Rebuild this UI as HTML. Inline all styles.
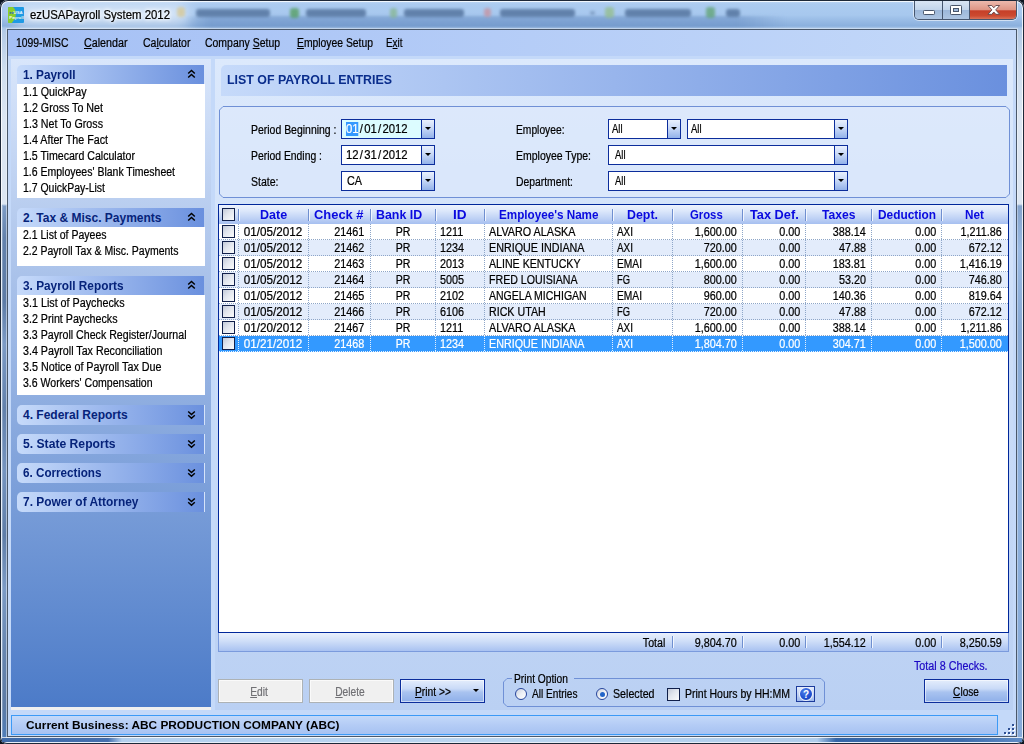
<!DOCTYPE html>
<html lang="en"><head><meta charset="utf-8"><title>ezUSAPayroll System 2012</title>
<style>
html,body{margin:0;padding:0}
body{width:1024px;height:744px;position:relative;overflow:hidden;background:#0b1420;font-family:"Liberation Sans",sans-serif;font-size:11px;color:#000}
div,span,svg{position:absolute;box-sizing:border-box}
.t{white-space:nowrap;display:block;-webkit-text-stroke:.22px currentColor}
u{text-decoration:underline;text-underline-offset:1px}
#frame{left:0;top:0;width:1024px;height:744px;border-radius:8px 8px 7px 7px;
 background:linear-gradient(#c3daf4 0,#accbf0 4px,#a7c8ee 15px,#97bae4 21px,#8bb0dd 26px,#a9c6e8 28px,#b4cbe7 31px,#cfdeef 70px,#dce6f2 120px,#dce6f2 204px,#84a3cc 206px,#9bbbe4 250px,#88a9d4 330px,#8fb1dd 480px,#86aad9 744px);
 box-shadow:inset 0 0 0 1px #1d2838, inset 0 0 0 2px rgba(255,255,255,.8)}
#fbot{left:2px;top:737px;width:1020px;height:5px;background:linear-gradient(90deg,#3f6aa8 0,#456fae 106px,#b4d0ee 120px,#bcd6f1 500px,#b0cdec 815px,#3566a8 834px,#3f6dad 960px,#5f8cc6 100%);box-shadow:inset 0 1px 0 rgba(255,255,255,.75)}
#client{left:8px;top:30px;width:1008px;height:706px;background:#c4d9f9;box-shadow:0 0 0 1px #4a586a,0 0 0 2px rgba(255,255,255,.35)}
.hd{background:linear-gradient(90deg,#c6dafa 0,#6a90de 100%)}
.cb{background:#fff;border:1px solid #0c2d9b}
.cbb{top:0;bottom:0;right:0;width:13px;border-left:1px solid #0c2d9b;background:linear-gradient(#e9f0fd 0,#c9d9f7 45%,#93b2ea 100%)}
.cbb:after{content:"";position:absolute;left:3px;top:7px;border:3px solid transparent;border-top:3px solid #000;border-bottom:0}
.chk{width:13px;height:13px;border:1px solid #101f4a;background:linear-gradient(135deg,#c3cad9 0,#e2e6ee 45%,#fafbfc 100%)}
.btn{border:1px solid #0c2d9b;background:linear-gradient(#e4edfc 0,#c9daf7 40%,#a9c3f0 55%,#8eafe9 100%);box-shadow:inset 0 0 0 1px rgba(255,255,255,.55)}
.btnd{border:1px solid #adb2b5;background:#f0f0f0;box-shadow:inset 0 0 0 1px #fafafa}
.row{left:219px;width:789px;height:16px}
.vd{top:0;width:1px;height:16px;background-image:linear-gradient(#8ea6c8 50%,transparent 50%);background-size:1px 2px}
.hdv{top:4px;width:2px;height:12px;border-left:1px solid #6f8fd0;border-right:1px solid #f2f6fe}
</style></head><body>
<div id="frame"></div><div id="fbot"></div>
<div style="left:2px;top:206px;width:5px;height:531px;background:linear-gradient(90deg,rgba(255,255,255,.35) 0,rgba(255,255,255,0) 30%,rgba(255,255,255,0) 70%,rgba(255,255,255,.3) 100%),linear-gradient(#7d9cc6 0,#6382ad 6%,#5c7ba6 18%,#7c9bc6 26%,#6281ac 38%,#7594bf 50%,#5e7da8 62%,#7c9bc5 72%,#6685b0 84%,#5c7ba6 94%,#4f7db8 100%)"></div>
<div style="left:14px;top:3px;width:175px;height:24px;border-radius:12px;background:#fff;opacity:.5;filter:blur(7px)"></div>
<div style="left:186px;top:16px;width:600px;height:12px;background:linear-gradient(90deg,rgba(70,110,170,0) 0,rgba(70,110,170,.3) 4%,rgba(70,110,170,.3) 92%,rgba(70,110,170,0) 100%);filter:blur(1.5px)"></div>
<div style="left:170px;top:2px;width:600px;height:26px;filter:blur(1.8px);opacity:.7">
<div style="left:7px;top:5px;width:8px;height:10px;background:#d9c68a;border-radius:3px"></div>
<div style="left:26px;top:7px;width:74px;height:8px;background:#44648f;border-radius:3px"></div>
<div style="left:120px;top:6px;width:9px;height:10px;background:#4c9a50;border-radius:3px"></div>
<div style="left:136px;top:7px;width:60px;height:8px;background:#44648f;border-radius:3px"></div>
<div style="left:220px;top:6px;width:7px;height:10px;background:#84b58a;border-radius:3px"></div>
<div style="left:234px;top:7px;width:60px;height:8px;background:#44648f;border-radius:3px"></div>
<div style="left:314px;top:6px;width:7px;height:9px;background:#c98d99;border-radius:3px"></div>
<div style="left:330px;top:7px;width:75px;height:8px;background:#44648f;border-radius:3px"></div>
<div style="left:420px;top:9px;width:5px;height:4px;background:#6f8db3;border-radius:3px"></div>
<div style="left:435px;top:5px;width:9px;height:11px;background:#93bd84;border-radius:3px"></div>
<div style="left:455px;top:7px;width:66px;height:8px;background:#44648f;border-radius:3px"></div>
<div style="left:536px;top:5px;width:9px;height:11px;background:#5aa068;border-radius:3px"></div>
<div style="left:556px;top:7px;width:14px;height:8px;background:#44648f;border-radius:3px"></div>
</div>
<svg style="left:8px;top:7px" width="16" height="16" viewBox="0 0 16 16"><rect width="16" height="16" rx="1" fill="#1f9ae4"/><path d="M0 1q0-1 1-1h4c3 2.5 3.6 7 2.2 10.500Q6 13.500 3.800 16H1q-1 0-1-1z" fill="#8bce2c"/><text x="1.300" y="7.300" font-size="4.300" font-weight="bold" fill="#1d4fc4" font-family="Liberation Sans,sans-serif">ez</text><text x="5.600" y="7.300" font-size="4.300" font-weight="bold" fill="#eaf6ff" font-family="Liberation Sans,sans-serif">USA</text><text x="1.300" y="11.600" font-size="4.300" font-weight="bold" fill="#f2fbe8" font-family="Liberation Sans,sans-serif">Payroll</text></svg>
<span class="t" style="top:7.34px;font-size:12px;line-height:16px;color:#000;left:30.00px;transform-origin:0 0;transform:scaleX(0.9498);text-shadow:0 0 6px #fff,0 0 6px #fff,0 0 3px #fff;">ezUSAPayroll System 2012</span>
<div style="left:912px;top:1px;width:107px;height:22px;overflow:hidden"><div style="left:2px;top:0;width:103px;height:19px;border-radius:0 0 5px 5px;border:1px solid #46566e;border-top:0;box-shadow:0 0 0 1px rgba(255,255,255,.55);overflow:hidden"><div style="left:0;top:0;width:28px;height:19px;background:linear-gradient(#d9e5f4 0,#c3d5eb 45%,#9db8da 50%,#b0c7e3 100%);border-right:1px solid #46566e"></div><div style="left:28px;top:0;width:27px;height:19px;background:linear-gradient(#d9e5f4 0,#c3d5eb 45%,#9db8da 50%,#b0c7e3 100%);border-right:1px solid #46566e"></div><div style="left:55px;top:0;width:46px;height:19px;background:linear-gradient(#ecb9ad 0,#df9686 45%,#c63f28 52%,#cc4a30 78%,#dc8068 100%)"></div></div></div>
<svg style="left:914px;top:0" width="103" height="20" viewBox="0 0 103 20">
<rect x="9.5" y="10.5" width="11" height="4" rx=".8" fill="#fff" stroke="#49566b"/>
<rect x="36.5" y="5.5" width="11" height="9" rx=".8" fill="#fff" stroke="#49566b"/><rect x="39.5" y="8.5" width="5" height="3" fill="#9db8da" stroke="#49566b"/>
<path d="M74 5.5h3.8l2 2.3 2-2.3h3.8l-3.9 4.4 3.9 4.4h-3.8l-2-2.3-2 2.3H74l3.9-4.4z" fill="#fff" stroke="#5d4246" stroke-width=".9"/>
</svg>
<div id="client"></div>
<div style="left:8px;top:30px;width:1008px;height:26px;background:linear-gradient(90deg,#a5c0f5 0,#c4d9f9 100%)"></div>
<span class="t" style="top:34.84px;font-size:12px;line-height:16px;color:#000;left:16.00px;transform-origin:0 0;transform:scaleX(0.8649);">1099-MISC</span>
<span class="t" style="top:34.84px;font-size:12px;line-height:16px;color:#000;left:84.00px;transform-origin:0 0;transform:scaleX(0.8932);"><u>C</u>alendar</span>
<span class="t" style="top:34.84px;font-size:12px;line-height:16px;color:#000;left:142.50px;transform-origin:0 0;transform:scaleX(0.8791);">Ca<u>l</u>culator</span>
<span class="t" style="top:34.84px;font-size:12px;line-height:16px;color:#000;left:205.00px;transform-origin:0 0;transform:scaleX(0.8715);">Company <u>S</u>etup</span>
<span class="t" style="top:34.84px;font-size:12px;line-height:16px;color:#000;left:297.00px;transform-origin:0 0;transform:scaleX(0.8630);"><u>E</u>mployee Setup</span>
<span class="t" style="top:34.84px;font-size:12px;line-height:16px;color:#000;left:386.00px;transform-origin:0 0;transform:scaleX(0.8244);">E<u>x</u>it</span>
<div style="left:11px;top:59px;width:200px;height:648px;background:linear-gradient(#d9e6fb 0,#4c7bc8 100%)"></div>
<div style="left:11px;top:707px;width:200px;height:3px;background:#f0f0f0"></div>
<div class="hd" style="left:17px;top:65px;width:187px;height:19px;border-radius:5px 0 0 0;"></div>
<span class="t" style="top:66.84px;font-size:12px;line-height:16px;color:#06237a;font-weight:bold;-webkit-text-stroke:0;left:23.00px;transform-origin:0 0;transform:scaleX(0.9836);">1. Payroll</span>
<svg style="left:187px;top:69px" width="9" height="11" viewBox="0 0 9 11"><path d="M1.2 4.5 4.5 1.5 7.8 4.5M1.2 8.5 4.5 5.5 7.8 8.5" fill="none" stroke="#000" stroke-width="1.5"/></svg>
<div style="left:17px;top:84px;width:188px;height:114px;background:#fff"></div>
<span class="t" style="top:83.84px;font-size:12px;line-height:16px;color:#000;left:23.00px;transform-origin:0 0;transform:scaleX(0.8897);">1.1 QuickPay</span>
<span class="t" style="top:99.84px;font-size:12px;line-height:16px;color:#000;left:23.00px;transform-origin:0 0;transform:scaleX(0.8906);">1.2 Gross To Net</span>
<span class="t" style="top:115.84px;font-size:12px;line-height:16px;color:#000;left:23.00px;transform-origin:0 0;transform:scaleX(0.8906);">1.3 Net To Gross</span>
<span class="t" style="top:131.84px;font-size:12px;line-height:16px;color:#000;left:23.00px;transform-origin:0 0;transform:scaleX(0.8931);">1.4 After The Fact</span>
<span class="t" style="top:147.84px;font-size:12px;line-height:16px;color:#000;left:23.00px;transform-origin:0 0;transform:scaleX(0.8837);">1.5 Timecard Calculator</span>
<span class="t" style="top:163.84px;font-size:12px;line-height:16px;color:#000;left:23.00px;transform-origin:0 0;transform:scaleX(0.8750);">1.6 Employees' Blank Timesheet</span>
<span class="t" style="top:179.84px;font-size:12px;line-height:16px;color:#000;left:23.00px;transform-origin:0 0;transform:scaleX(0.8719);">1.7 QuickPay-List</span>
<div class="hd" style="left:17px;top:208px;width:187px;height:19px;border-radius:5px 0 0 0;"></div>
<span class="t" style="top:209.84px;font-size:12px;line-height:16px;color:#06237a;font-weight:bold;-webkit-text-stroke:0;left:23.00px;transform-origin:0 0;">2. Tax &amp; Misc. Payments</span>
<svg style="left:187px;top:212px" width="9" height="11" viewBox="0 0 9 11"><path d="M1.2 4.5 4.5 1.5 7.8 4.5M1.2 8.5 4.5 5.5 7.8 8.5" fill="none" stroke="#000" stroke-width="1.5"/></svg>
<div style="left:17px;top:227px;width:188px;height:39px;background:#fff"></div>
<span class="t" style="top:226.84px;font-size:12px;line-height:16px;color:#000;left:23.00px;transform-origin:0 0;transform:scaleX(0.8753);">2.1 List of Payees</span>
<span class="t" style="top:242.84px;font-size:12px;line-height:16px;color:#000;left:23.00px;transform-origin:0 0;transform:scaleX(0.8744);">2.2 Payroll Tax &amp; Misc. Payments</span>
<div class="hd" style="left:17px;top:276px;width:187px;height:19px;border-radius:5px 0 0 0;"></div>
<span class="t" style="top:277.84px;font-size:12px;line-height:16px;color:#06237a;font-weight:bold;-webkit-text-stroke:0;left:23.00px;transform-origin:0 0;transform:scaleX(0.9848);">3. Payroll Reports</span>
<svg style="left:187px;top:280px" width="9" height="11" viewBox="0 0 9 11"><path d="M1.2 4.5 4.5 1.5 7.8 4.5M1.2 8.5 4.5 5.5 7.8 8.5" fill="none" stroke="#000" stroke-width="1.5"/></svg>
<div style="left:17px;top:295px;width:188px;height:100px;background:#fff"></div>
<span class="t" style="top:294.84px;font-size:12px;line-height:16px;color:#000;left:23.00px;transform-origin:0 0;transform:scaleX(0.8951);">3.1 List of Paychecks</span>
<span class="t" style="top:310.84px;font-size:12px;line-height:16px;color:#000;left:23.00px;transform-origin:0 0;transform:scaleX(0.8910);">3.2 Print Paychecks</span>
<span class="t" style="top:326.84px;font-size:12px;line-height:16px;color:#000;left:23.00px;transform-origin:0 0;transform:scaleX(0.8849);">3.3 Payroll Check Register/Journal</span>
<span class="t" style="top:342.84px;font-size:12px;line-height:16px;color:#000;left:23.00px;transform-origin:0 0;transform:scaleX(0.8912);">3.4 Payroll Tax Reconciliation</span>
<span class="t" style="top:358.84px;font-size:12px;line-height:16px;color:#000;left:23.00px;transform-origin:0 0;transform:scaleX(0.8963);">3.5 Notice of Payroll Tax Due</span>
<span class="t" style="top:374.84px;font-size:12px;line-height:16px;color:#000;left:23.00px;transform-origin:0 0;transform:scaleX(0.8782);">3.6 Workers' Compensation</span>
<div class="hd" style="left:17px;top:405px;width:188px;height:20px;border-radius:5px 0 0 5px;box-shadow:inset -1px 0 0 rgba(225,236,252,.9);"></div>
<span class="t" style="top:407.34px;font-size:12px;line-height:16px;color:#06237a;font-weight:bold;-webkit-text-stroke:0;left:23.00px;transform-origin:0 0;">4. Federal Reports</span>
<svg style="left:187px;top:409px" width="9" height="11" viewBox="0 0 9 11"><path d="M1.2 2.5 4.5 5.5 7.8 2.5M1.2 6.3 4.5 9.3 7.8 6.3" fill="none" stroke="#000" stroke-width="1.5"/></svg>
<div class="hd" style="left:17px;top:434px;width:188px;height:20px;border-radius:5px 0 0 5px;box-shadow:inset -1px 0 0 rgba(225,236,252,.9);"></div>
<span class="t" style="top:436.34px;font-size:12px;line-height:16px;color:#06237a;font-weight:bold;-webkit-text-stroke:0;left:23.00px;transform-origin:0 0;transform:scaleX(1.0125);">5. State Reports</span>
<svg style="left:187px;top:438px" width="9" height="11" viewBox="0 0 9 11"><path d="M1.2 2.5 4.5 5.5 7.8 2.5M1.2 6.3 4.5 9.3 7.8 6.3" fill="none" stroke="#000" stroke-width="1.5"/></svg>
<div class="hd" style="left:17px;top:463px;width:188px;height:20px;border-radius:5px 0 0 5px;box-shadow:inset -1px 0 0 rgba(225,236,252,.9);"></div>
<span class="t" style="top:465.34px;font-size:12px;line-height:16px;color:#06237a;font-weight:bold;-webkit-text-stroke:0;left:23.00px;transform-origin:0 0;transform:scaleX(0.9727);">6. Corrections</span>
<svg style="left:187px;top:467px" width="9" height="11" viewBox="0 0 9 11"><path d="M1.2 2.5 4.5 5.5 7.8 2.5M1.2 6.3 4.5 9.3 7.8 6.3" fill="none" stroke="#000" stroke-width="1.5"/></svg>
<div class="hd" style="left:17px;top:492px;width:188px;height:20px;border-radius:5px 0 0 5px;box-shadow:inset -1px 0 0 rgba(225,236,252,.9);"></div>
<span class="t" style="top:494.34px;font-size:12px;line-height:16px;color:#06237a;font-weight:bold;-webkit-text-stroke:0;left:23.00px;transform-origin:0 0;transform:scaleX(0.9935);">7. Power of Attorney</span>
<svg style="left:187px;top:496px" width="9" height="11" viewBox="0 0 9 11"><path d="M1.2 2.5 4.5 5.5 7.8 2.5M1.2 6.3 4.5 9.3 7.8 6.3" fill="none" stroke="#000" stroke-width="1.5"/></svg>
<div style="left:215px;top:59px;width:798px;height:651px;background:linear-gradient(#dce9fc 0,#d3e3fa 25%,#bad0f3 100%)"></div>
<div class="hd" style="left:221px;top:65px;width:786px;height:31px;border-radius:5px 0 0 0"></div>
<span class="t" style="top:71.84px;font-size:12px;line-height:16px;color:#0a2d8c;font-weight:bold;-webkit-text-stroke:0;left:226.50px;transform-origin:0 0;transform:scaleX(1.0326);">LIST OF PAYROLL ENTRIES</span>
<svg style="left:219px;top:106px" width="791" height="92" viewBox="0 0 791 92"><path d="M4.0 0.5H787.0L790.5 4.0V88.0L787.0 91.5H4.0L0.5 88.0V4.0Z" fill="rgba(222,234,252,.55)" stroke="#6f90d6" stroke-width="1"/></svg>
<span class="t" style="top:121.84px;font-size:12px;line-height:16px;color:#000;left:251.00px;transform-origin:0 0;transform:scaleX(0.8718);">Period Beginning :</span>
<span class="t" style="top:147.84px;font-size:12px;line-height:16px;color:#000;left:251.00px;transform-origin:0 0;transform:scaleX(0.8652);">Period Ending :</span>
<span class="t" style="top:173.84px;font-size:12px;line-height:16px;color:#000;left:251.00px;transform-origin:0 0;transform:scaleX(0.8769);">State:</span>
<span class="t" style="top:121.84px;font-size:12px;line-height:16px;color:#000;left:516.00px;transform-origin:0 0;transform:scaleX(0.8553);">Employee:</span>
<span class="t" style="top:147.84px;font-size:12px;line-height:16px;color:#000;left:516.00px;transform-origin:0 0;transform:scaleX(0.8738);">Employee Type:</span>
<span class="t" style="top:173.84px;font-size:12px;line-height:16px;color:#000;left:516.00px;transform-origin:0 0;transform:scaleX(0.8632);">Department:</span>
<div class="cb" style="left:341px;top:119px;width:94px;height:20px;background:#dcfcff"><div class="cbb"></div></div>
<span class="t" style="top:121.44px;font-size:12px;line-height:16px;color:#000;left:345.60px;transform-origin:0 0;transform:scaleX(0.9440);"><i style="font-style:normal;background:#3399ff;color:#fff">01</i><i style="font-style:normal;padding:0 1.3px">/</i>01<i style="font-style:normal;padding:0 1.3px">/</i>2012</span>
<div class="cb" style="left:341px;top:145px;width:94px;height:20px;background:#fff"><div class="cbb"></div></div>
<span class="t" style="top:147.44px;font-size:12px;line-height:16px;color:#000;left:345.60px;transform-origin:0 0;transform:scaleX(0.9440);">12<i style="font-style:normal;padding:0 1.3px">/</i>31<i style="font-style:normal;padding:0 1.3px">/</i>2012</span>
<div class="cb" style="left:341px;top:171px;width:94px;height:20px;background:#fff"><div class="cbb"></div></div>
<span class="t" style="top:173.44px;font-size:12px;line-height:16px;color:#000;left:346.50px;transform-origin:0 0;transform:scaleX(0.8997);">CA</span>
<div class="cb" style="left:608px;top:119px;width:73px;height:20px;background:#fff"><div class="cbb"></div></div>
<span class="t" style="top:121.44px;font-size:12px;line-height:16px;color:#000;left:611.50px;transform-origin:0 0;transform:scaleX(0.7869);">All</span>
<div class="cb" style="left:687px;top:119px;width:161px;height:20px;background:#fff"><div class="cbb"></div></div>
<span class="t" style="top:121.44px;font-size:12px;line-height:16px;color:#000;left:690.50px;transform-origin:0 0;transform:scaleX(0.7869);">All</span>
<div class="cb" style="left:608px;top:145px;width:240px;height:20px;background:#fff"><div class="cbb"></div></div>
<span class="t" style="top:147.44px;font-size:12px;line-height:16px;color:#000;left:614.50px;transform-origin:0 0;transform:scaleX(0.7869);">All</span>
<div class="cb" style="left:608px;top:171px;width:240px;height:20px;background:#fff"><div class="cbb"></div></div>
<span class="t" style="top:173.44px;font-size:12px;line-height:16px;color:#000;left:614.50px;transform-origin:0 0;transform:scaleX(0.7869);">All</span>
<div style="left:218px;top:204px;width:791px;height:429px;border:1px solid #00279a;background:#fff"></div>
<div style="left:219px;top:205px;width:789px;height:19px;background:linear-gradient(#eef3fd 0,#dde8fb 30%,#bfd2f5 70%,#a6bff0 100%)"></div>
<div class="hdv" style="left:238px;top:209px"></div>
<div class="hdv" style="left:308px;top:209px"></div>
<div class="hdv" style="left:370px;top:209px"></div>
<div class="hdv" style="left:435px;top:209px"></div>
<div class="hdv" style="left:484px;top:209px"></div>
<div class="hdv" style="left:612px;top:209px"></div>
<div class="hdv" style="left:672px;top:209px"></div>
<div class="hdv" style="left:742px;top:209px"></div>
<div class="hdv" style="left:805px;top:209px"></div>
<div class="hdv" style="left:871px;top:209px"></div>
<div class="hdv" style="left:941px;top:209px"></div>
<span class="t" style="top:206.84px;font-size:12px;line-height:16px;color:#0a0adf;font-weight:bold;-webkit-text-stroke:0;left:260.00px;transform-origin:0 0;transform:scaleX(1.0417);">Date</span>
<span class="t" style="top:206.84px;font-size:12px;line-height:16px;color:#0a0adf;font-weight:bold;-webkit-text-stroke:0;left:313.60px;transform-origin:0 0;transform:scaleX(1.0754);">Check #</span>
<span class="t" style="top:206.84px;font-size:12px;line-height:16px;color:#0a0adf;font-weight:bold;-webkit-text-stroke:0;left:375.90px;transform-origin:0 0;transform:scaleX(1.0338);">Bank ID</span>
<span class="t" style="top:206.84px;font-size:12px;line-height:16px;color:#0a0adf;font-weight:bold;-webkit-text-stroke:0;left:453.10px;transform-origin:0 0;transform:scaleX(1.1333);">ID</span>
<span class="t" style="top:206.84px;font-size:12px;line-height:16px;color:#0a0adf;font-weight:bold;-webkit-text-stroke:0;left:499.10px;transform-origin:0 0;transform:scaleX(0.9733);">Employee's Name</span>
<span class="t" style="top:206.84px;font-size:12px;line-height:16px;color:#0a0adf;font-weight:bold;-webkit-text-stroke:0;left:627.30px;transform-origin:0 0;transform:scaleX(1.0333);">Dept.</span>
<span class="t" style="top:206.84px;font-size:12px;line-height:16px;color:#0a0adf;font-weight:bold;-webkit-text-stroke:0;left:690.40px;transform-origin:0 0;transform:scaleX(0.9427);">Gross</span>
<span class="t" style="top:206.84px;font-size:12px;line-height:16px;color:#0a0adf;font-weight:bold;-webkit-text-stroke:0;left:749.70px;transform-origin:0 0;transform:scaleX(1.0634);">Tax Def.</span>
<span class="t" style="top:206.84px;font-size:12px;line-height:16px;color:#0a0adf;font-weight:bold;-webkit-text-stroke:0;left:821.70px;transform-origin:0 0;transform:scaleX(1.0078);">Taxes</span>
<span class="t" style="top:206.84px;font-size:12px;line-height:16px;color:#0a0adf;font-weight:bold;-webkit-text-stroke:0;left:877.50px;transform-origin:0 0;transform:scaleX(0.9885);">Deduction</span>
<span class="t" style="top:206.84px;font-size:12px;line-height:16px;color:#0a0adf;font-weight:bold;-webkit-text-stroke:0;left:964.70px;transform-origin:0 0;transform:scaleX(0.9771);">Net</span>
<div class="chk" style="left:222px;top:208px"></div>
<div class="row" style="top:224px;background:#fff"><div class="vd" style="left:19px;"></div><div class="vd" style="left:89px;"></div><div class="vd" style="left:151px;"></div><div class="vd" style="left:216px;"></div><div class="vd" style="left:265px;"></div><div class="vd" style="left:393px;"></div><div class="vd" style="left:453px;"></div><div class="vd" style="left:523px;"></div><div class="vd" style="left:586px;"></div><div class="vd" style="left:652px;"></div><div class="vd" style="left:722px;"></div><div style="left:0;top:15px;width:789px;height:1px;background-image:linear-gradient(90deg,#8ea6c8 50%,transparent 50%);background-size:2px 1px"></div></div>
<div class="chk" style="left:222px;top:225px"></div>
<span class="t" style="top:223.84px;font-size:12px;line-height:16px;color:#000;left:123.20px;width:300px;text-align:center;transform-origin:50% 0;transform:scaleX(0.9740);">01/05/2012</span>
<span class="t" style="top:223.84px;font-size:12px;line-height:16px;color:#000;right:659.50px;transform-origin:100% 0;transform:scaleX(0.9000);">21461</span>
<span class="t" style="top:223.84px;font-size:12px;line-height:16px;color:#000;left:253.00px;width:300px;text-align:center;transform-origin:50% 0;transform:scaleX(0.8800);">PR</span>
<span class="t" style="top:223.84px;font-size:12px;line-height:16px;color:#000;left:440.00px;transform-origin:0 0;transform:scaleX(0.9000);">1211</span>
<span class="t" style="top:223.84px;font-size:12px;line-height:16px;color:#000;left:489.00px;transform-origin:0 0;transform:scaleX(0.8984);">ALVARO ALASKA</span>
<span class="t" style="top:223.84px;font-size:12px;line-height:16px;color:#000;left:617.00px;transform-origin:0 0;transform:scaleX(0.8271);">AXI</span>
<span class="t" style="top:223.84px;font-size:12px;line-height:16px;color:#000;right:287.00px;transform-origin:100% 0;transform:scaleX(0.9000);">1,600.00</span>
<span class="t" style="top:223.84px;font-size:12px;line-height:16px;color:#000;right:224.00px;transform-origin:100% 0;transform:scaleX(0.9000);">0.00</span>
<span class="t" style="top:223.84px;font-size:12px;line-height:16px;color:#000;right:158.00px;transform-origin:100% 0;transform:scaleX(0.9000);">388.14</span>
<span class="t" style="top:223.84px;font-size:12px;line-height:16px;color:#000;right:88.00px;transform-origin:100% 0;transform:scaleX(0.9000);">0.00</span>
<span class="t" style="top:223.84px;font-size:12px;line-height:16px;color:#000;right:22.00px;transform-origin:100% 0;transform:scaleX(0.9000);">1,211.86</span>
<div class="row" style="top:240px;background:#e3ecfb"><div class="vd" style="left:19px;"></div><div class="vd" style="left:89px;"></div><div class="vd" style="left:151px;"></div><div class="vd" style="left:216px;"></div><div class="vd" style="left:265px;"></div><div class="vd" style="left:393px;"></div><div class="vd" style="left:453px;"></div><div class="vd" style="left:523px;"></div><div class="vd" style="left:586px;"></div><div class="vd" style="left:652px;"></div><div class="vd" style="left:722px;"></div><div style="left:0;top:15px;width:789px;height:1px;background-image:linear-gradient(90deg,#8ea6c8 50%,transparent 50%);background-size:2px 1px"></div></div>
<div class="chk" style="left:222px;top:241px"></div>
<span class="t" style="top:239.84px;font-size:12px;line-height:16px;color:#000;left:123.20px;width:300px;text-align:center;transform-origin:50% 0;transform:scaleX(0.9740);">01/05/2012</span>
<span class="t" style="top:239.84px;font-size:12px;line-height:16px;color:#000;right:659.50px;transform-origin:100% 0;transform:scaleX(0.9000);">21462</span>
<span class="t" style="top:239.84px;font-size:12px;line-height:16px;color:#000;left:253.00px;width:300px;text-align:center;transform-origin:50% 0;transform:scaleX(0.8800);">PR</span>
<span class="t" style="top:239.84px;font-size:12px;line-height:16px;color:#000;left:440.00px;transform-origin:0 0;transform:scaleX(0.9000);">1234</span>
<span class="t" style="top:239.84px;font-size:12px;line-height:16px;color:#000;left:489.00px;transform-origin:0 0;transform:scaleX(0.8951);">ENRIQUE INDIANA</span>
<span class="t" style="top:239.84px;font-size:12px;line-height:16px;color:#000;left:617.00px;transform-origin:0 0;transform:scaleX(0.8271);">AXI</span>
<span class="t" style="top:239.84px;font-size:12px;line-height:16px;color:#000;right:287.00px;transform-origin:100% 0;transform:scaleX(0.9000);">720.00</span>
<span class="t" style="top:239.84px;font-size:12px;line-height:16px;color:#000;right:224.00px;transform-origin:100% 0;transform:scaleX(0.9000);">0.00</span>
<span class="t" style="top:239.84px;font-size:12px;line-height:16px;color:#000;right:158.00px;transform-origin:100% 0;transform:scaleX(0.9000);">47.88</span>
<span class="t" style="top:239.84px;font-size:12px;line-height:16px;color:#000;right:88.00px;transform-origin:100% 0;transform:scaleX(0.9000);">0.00</span>
<span class="t" style="top:239.84px;font-size:12px;line-height:16px;color:#000;right:22.00px;transform-origin:100% 0;transform:scaleX(0.9000);">672.12</span>
<div class="row" style="top:256px;background:#fff"><div class="vd" style="left:19px;"></div><div class="vd" style="left:89px;"></div><div class="vd" style="left:151px;"></div><div class="vd" style="left:216px;"></div><div class="vd" style="left:265px;"></div><div class="vd" style="left:393px;"></div><div class="vd" style="left:453px;"></div><div class="vd" style="left:523px;"></div><div class="vd" style="left:586px;"></div><div class="vd" style="left:652px;"></div><div class="vd" style="left:722px;"></div><div style="left:0;top:15px;width:789px;height:1px;background-image:linear-gradient(90deg,#8ea6c8 50%,transparent 50%);background-size:2px 1px"></div></div>
<div class="chk" style="left:222px;top:257px"></div>
<span class="t" style="top:255.84px;font-size:12px;line-height:16px;color:#000;left:123.20px;width:300px;text-align:center;transform-origin:50% 0;transform:scaleX(0.9740);">01/05/2012</span>
<span class="t" style="top:255.84px;font-size:12px;line-height:16px;color:#000;right:659.50px;transform-origin:100% 0;transform:scaleX(0.9000);">21463</span>
<span class="t" style="top:255.84px;font-size:12px;line-height:16px;color:#000;left:253.00px;width:300px;text-align:center;transform-origin:50% 0;transform:scaleX(0.8800);">PR</span>
<span class="t" style="top:255.84px;font-size:12px;line-height:16px;color:#000;left:440.00px;transform-origin:0 0;transform:scaleX(0.9000);">2013</span>
<span class="t" style="top:255.84px;font-size:12px;line-height:16px;color:#000;left:489.00px;transform-origin:0 0;transform:scaleX(0.8853);">ALINE KENTUCKY</span>
<span class="t" style="top:255.84px;font-size:12px;line-height:16px;color:#000;left:617.00px;transform-origin:0 0;transform:scaleX(0.8520);">EMAI</span>
<span class="t" style="top:255.84px;font-size:12px;line-height:16px;color:#000;right:287.00px;transform-origin:100% 0;transform:scaleX(0.9000);">1,600.00</span>
<span class="t" style="top:255.84px;font-size:12px;line-height:16px;color:#000;right:224.00px;transform-origin:100% 0;transform:scaleX(0.9000);">0.00</span>
<span class="t" style="top:255.84px;font-size:12px;line-height:16px;color:#000;right:158.00px;transform-origin:100% 0;transform:scaleX(0.9000);">183.81</span>
<span class="t" style="top:255.84px;font-size:12px;line-height:16px;color:#000;right:88.00px;transform-origin:100% 0;transform:scaleX(0.9000);">0.00</span>
<span class="t" style="top:255.84px;font-size:12px;line-height:16px;color:#000;right:22.00px;transform-origin:100% 0;transform:scaleX(0.9000);">1,416.19</span>
<div class="row" style="top:272px;background:#e3ecfb"><div class="vd" style="left:19px;"></div><div class="vd" style="left:89px;"></div><div class="vd" style="left:151px;"></div><div class="vd" style="left:216px;"></div><div class="vd" style="left:265px;"></div><div class="vd" style="left:393px;"></div><div class="vd" style="left:453px;"></div><div class="vd" style="left:523px;"></div><div class="vd" style="left:586px;"></div><div class="vd" style="left:652px;"></div><div class="vd" style="left:722px;"></div><div style="left:0;top:15px;width:789px;height:1px;background-image:linear-gradient(90deg,#8ea6c8 50%,transparent 50%);background-size:2px 1px"></div></div>
<div class="chk" style="left:222px;top:273px"></div>
<span class="t" style="top:271.84px;font-size:12px;line-height:16px;color:#000;left:123.20px;width:300px;text-align:center;transform-origin:50% 0;transform:scaleX(0.9740);">01/05/2012</span>
<span class="t" style="top:271.84px;font-size:12px;line-height:16px;color:#000;right:659.50px;transform-origin:100% 0;transform:scaleX(0.9000);">21464</span>
<span class="t" style="top:271.84px;font-size:12px;line-height:16px;color:#000;left:253.00px;width:300px;text-align:center;transform-origin:50% 0;transform:scaleX(0.8800);">PR</span>
<span class="t" style="top:271.84px;font-size:12px;line-height:16px;color:#000;left:440.00px;transform-origin:0 0;transform:scaleX(0.9000);">5005</span>
<span class="t" style="top:271.84px;font-size:12px;line-height:16px;color:#000;left:489.00px;transform-origin:0 0;transform:scaleX(0.8847);">FRED LOUISIANA</span>
<span class="t" style="top:271.84px;font-size:12px;line-height:16px;color:#000;left:617.00px;transform-origin:0 0;transform:scaleX(0.7798);">FG</span>
<span class="t" style="top:271.84px;font-size:12px;line-height:16px;color:#000;right:287.00px;transform-origin:100% 0;transform:scaleX(0.9000);">800.00</span>
<span class="t" style="top:271.84px;font-size:12px;line-height:16px;color:#000;right:224.00px;transform-origin:100% 0;transform:scaleX(0.9000);">0.00</span>
<span class="t" style="top:271.84px;font-size:12px;line-height:16px;color:#000;right:158.00px;transform-origin:100% 0;transform:scaleX(0.9000);">53.20</span>
<span class="t" style="top:271.84px;font-size:12px;line-height:16px;color:#000;right:88.00px;transform-origin:100% 0;transform:scaleX(0.9000);">0.00</span>
<span class="t" style="top:271.84px;font-size:12px;line-height:16px;color:#000;right:22.00px;transform-origin:100% 0;transform:scaleX(0.9000);">746.80</span>
<div class="row" style="top:288px;background:#fff"><div class="vd" style="left:19px;"></div><div class="vd" style="left:89px;"></div><div class="vd" style="left:151px;"></div><div class="vd" style="left:216px;"></div><div class="vd" style="left:265px;"></div><div class="vd" style="left:393px;"></div><div class="vd" style="left:453px;"></div><div class="vd" style="left:523px;"></div><div class="vd" style="left:586px;"></div><div class="vd" style="left:652px;"></div><div class="vd" style="left:722px;"></div><div style="left:0;top:15px;width:789px;height:1px;background-image:linear-gradient(90deg,#8ea6c8 50%,transparent 50%);background-size:2px 1px"></div></div>
<div class="chk" style="left:222px;top:289px"></div>
<span class="t" style="top:287.84px;font-size:12px;line-height:16px;color:#000;left:123.20px;width:300px;text-align:center;transform-origin:50% 0;transform:scaleX(0.9740);">01/05/2012</span>
<span class="t" style="top:287.84px;font-size:12px;line-height:16px;color:#000;right:659.50px;transform-origin:100% 0;transform:scaleX(0.9000);">21465</span>
<span class="t" style="top:287.84px;font-size:12px;line-height:16px;color:#000;left:253.00px;width:300px;text-align:center;transform-origin:50% 0;transform:scaleX(0.8800);">PR</span>
<span class="t" style="top:287.84px;font-size:12px;line-height:16px;color:#000;left:440.00px;transform-origin:0 0;transform:scaleX(0.9000);">2102</span>
<span class="t" style="top:287.84px;font-size:12px;line-height:16px;color:#000;left:489.00px;transform-origin:0 0;transform:scaleX(0.8773);">ANGELA MICHIGAN</span>
<span class="t" style="top:287.84px;font-size:12px;line-height:16px;color:#000;left:617.00px;transform-origin:0 0;transform:scaleX(0.8520);">EMAI</span>
<span class="t" style="top:287.84px;font-size:12px;line-height:16px;color:#000;right:287.00px;transform-origin:100% 0;transform:scaleX(0.9000);">960.00</span>
<span class="t" style="top:287.84px;font-size:12px;line-height:16px;color:#000;right:224.00px;transform-origin:100% 0;transform:scaleX(0.9000);">0.00</span>
<span class="t" style="top:287.84px;font-size:12px;line-height:16px;color:#000;right:158.00px;transform-origin:100% 0;transform:scaleX(0.9000);">140.36</span>
<span class="t" style="top:287.84px;font-size:12px;line-height:16px;color:#000;right:88.00px;transform-origin:100% 0;transform:scaleX(0.9000);">0.00</span>
<span class="t" style="top:287.84px;font-size:12px;line-height:16px;color:#000;right:22.00px;transform-origin:100% 0;transform:scaleX(0.9000);">819.64</span>
<div class="row" style="top:304px;background:#e3ecfb"><div class="vd" style="left:19px;"></div><div class="vd" style="left:89px;"></div><div class="vd" style="left:151px;"></div><div class="vd" style="left:216px;"></div><div class="vd" style="left:265px;"></div><div class="vd" style="left:393px;"></div><div class="vd" style="left:453px;"></div><div class="vd" style="left:523px;"></div><div class="vd" style="left:586px;"></div><div class="vd" style="left:652px;"></div><div class="vd" style="left:722px;"></div><div style="left:0;top:15px;width:789px;height:1px;background-image:linear-gradient(90deg,#8ea6c8 50%,transparent 50%);background-size:2px 1px"></div></div>
<div class="chk" style="left:222px;top:305px"></div>
<span class="t" style="top:303.84px;font-size:12px;line-height:16px;color:#000;left:123.20px;width:300px;text-align:center;transform-origin:50% 0;transform:scaleX(0.9740);">01/05/2012</span>
<span class="t" style="top:303.84px;font-size:12px;line-height:16px;color:#000;right:659.50px;transform-origin:100% 0;transform:scaleX(0.9000);">21466</span>
<span class="t" style="top:303.84px;font-size:12px;line-height:16px;color:#000;left:253.00px;width:300px;text-align:center;transform-origin:50% 0;transform:scaleX(0.8800);">PR</span>
<span class="t" style="top:303.84px;font-size:12px;line-height:16px;color:#000;left:440.00px;transform-origin:0 0;transform:scaleX(0.9000);">6106</span>
<span class="t" style="top:303.84px;font-size:12px;line-height:16px;color:#000;left:489.00px;transform-origin:0 0;transform:scaleX(0.8890);">RICK UTAH</span>
<span class="t" style="top:303.84px;font-size:12px;line-height:16px;color:#000;left:617.00px;transform-origin:0 0;transform:scaleX(0.7798);">FG</span>
<span class="t" style="top:303.84px;font-size:12px;line-height:16px;color:#000;right:287.00px;transform-origin:100% 0;transform:scaleX(0.9000);">720.00</span>
<span class="t" style="top:303.84px;font-size:12px;line-height:16px;color:#000;right:224.00px;transform-origin:100% 0;transform:scaleX(0.9000);">0.00</span>
<span class="t" style="top:303.84px;font-size:12px;line-height:16px;color:#000;right:158.00px;transform-origin:100% 0;transform:scaleX(0.9000);">47.88</span>
<span class="t" style="top:303.84px;font-size:12px;line-height:16px;color:#000;right:88.00px;transform-origin:100% 0;transform:scaleX(0.9000);">0.00</span>
<span class="t" style="top:303.84px;font-size:12px;line-height:16px;color:#000;right:22.00px;transform-origin:100% 0;transform:scaleX(0.9000);">672.12</span>
<div class="row" style="top:320px;background:#fff"><div class="vd" style="left:19px;"></div><div class="vd" style="left:89px;"></div><div class="vd" style="left:151px;"></div><div class="vd" style="left:216px;"></div><div class="vd" style="left:265px;"></div><div class="vd" style="left:393px;"></div><div class="vd" style="left:453px;"></div><div class="vd" style="left:523px;"></div><div class="vd" style="left:586px;"></div><div class="vd" style="left:652px;"></div><div class="vd" style="left:722px;"></div><div style="left:0;top:15px;width:789px;height:1px;background-image:linear-gradient(90deg,#8ea6c8 50%,transparent 50%);background-size:2px 1px"></div></div>
<div class="chk" style="left:222px;top:321px"></div>
<span class="t" style="top:319.84px;font-size:12px;line-height:16px;color:#000;left:123.20px;width:300px;text-align:center;transform-origin:50% 0;transform:scaleX(0.9740);">01/20/2012</span>
<span class="t" style="top:319.84px;font-size:12px;line-height:16px;color:#000;right:659.50px;transform-origin:100% 0;transform:scaleX(0.9000);">21467</span>
<span class="t" style="top:319.84px;font-size:12px;line-height:16px;color:#000;left:253.00px;width:300px;text-align:center;transform-origin:50% 0;transform:scaleX(0.8800);">PR</span>
<span class="t" style="top:319.84px;font-size:12px;line-height:16px;color:#000;left:440.00px;transform-origin:0 0;transform:scaleX(0.9000);">1211</span>
<span class="t" style="top:319.84px;font-size:12px;line-height:16px;color:#000;left:489.00px;transform-origin:0 0;transform:scaleX(0.8984);">ALVARO ALASKA</span>
<span class="t" style="top:319.84px;font-size:12px;line-height:16px;color:#000;left:617.00px;transform-origin:0 0;transform:scaleX(0.8271);">AXI</span>
<span class="t" style="top:319.84px;font-size:12px;line-height:16px;color:#000;right:287.00px;transform-origin:100% 0;transform:scaleX(0.9000);">1,600.00</span>
<span class="t" style="top:319.84px;font-size:12px;line-height:16px;color:#000;right:224.00px;transform-origin:100% 0;transform:scaleX(0.9000);">0.00</span>
<span class="t" style="top:319.84px;font-size:12px;line-height:16px;color:#000;right:158.00px;transform-origin:100% 0;transform:scaleX(0.9000);">388.14</span>
<span class="t" style="top:319.84px;font-size:12px;line-height:16px;color:#000;right:88.00px;transform-origin:100% 0;transform:scaleX(0.9000);">0.00</span>
<span class="t" style="top:319.84px;font-size:12px;line-height:16px;color:#000;right:22.00px;transform-origin:100% 0;transform:scaleX(0.9000);">1,211.86</span>
<div class="row" style="top:336px;background:#3399ff"><div class="vd" style="left:19px;background-image:linear-gradient(#e4f1ff 50%,transparent 50%)"></div><div class="vd" style="left:89px;background-image:linear-gradient(#e4f1ff 50%,transparent 50%)"></div><div class="vd" style="left:151px;background-image:linear-gradient(#e4f1ff 50%,transparent 50%)"></div><div class="vd" style="left:216px;background-image:linear-gradient(#e4f1ff 50%,transparent 50%)"></div><div class="vd" style="left:265px;background-image:linear-gradient(#e4f1ff 50%,transparent 50%)"></div><div class="vd" style="left:393px;background-image:linear-gradient(#e4f1ff 50%,transparent 50%)"></div><div class="vd" style="left:453px;background-image:linear-gradient(#e4f1ff 50%,transparent 50%)"></div><div class="vd" style="left:523px;background-image:linear-gradient(#e4f1ff 50%,transparent 50%)"></div><div class="vd" style="left:586px;background-image:linear-gradient(#e4f1ff 50%,transparent 50%)"></div><div class="vd" style="left:652px;background-image:linear-gradient(#e4f1ff 50%,transparent 50%)"></div><div class="vd" style="left:722px;background-image:linear-gradient(#e4f1ff 50%,transparent 50%)"></div><div style="left:0;top:15px;width:789px;height:1px;background-image:linear-gradient(90deg,#e4f1ff 50%,transparent 50%);background-size:2px 1px"></div></div>
<div class="chk" style="left:222px;top:337px"></div>
<span class="t" style="top:335.84px;font-size:12px;line-height:16px;color:#fff;left:123.20px;width:300px;text-align:center;transform-origin:50% 0;transform:scaleX(0.9740);">01/21/2012</span>
<span class="t" style="top:335.84px;font-size:12px;line-height:16px;color:#fff;right:659.50px;transform-origin:100% 0;transform:scaleX(0.9000);">21468</span>
<span class="t" style="top:335.84px;font-size:12px;line-height:16px;color:#fff;left:253.00px;width:300px;text-align:center;transform-origin:50% 0;transform:scaleX(0.8800);">PR</span>
<span class="t" style="top:335.84px;font-size:12px;line-height:16px;color:#fff;left:440.00px;transform-origin:0 0;transform:scaleX(0.9000);">1234</span>
<span class="t" style="top:335.84px;font-size:12px;line-height:16px;color:#fff;left:489.00px;transform-origin:0 0;transform:scaleX(0.8951);">ENRIQUE INDIANA</span>
<span class="t" style="top:335.84px;font-size:12px;line-height:16px;color:#fff;left:617.00px;transform-origin:0 0;transform:scaleX(0.8271);">AXI</span>
<span class="t" style="top:335.84px;font-size:12px;line-height:16px;color:#fff;right:287.00px;transform-origin:100% 0;transform:scaleX(0.9000);">1,804.70</span>
<span class="t" style="top:335.84px;font-size:12px;line-height:16px;color:#fff;right:224.00px;transform-origin:100% 0;transform:scaleX(0.9000);">0.00</span>
<span class="t" style="top:335.84px;font-size:12px;line-height:16px;color:#fff;right:158.00px;transform-origin:100% 0;transform:scaleX(0.9000);">304.71</span>
<span class="t" style="top:335.84px;font-size:12px;line-height:16px;color:#fff;right:88.00px;transform-origin:100% 0;transform:scaleX(0.9000);">0.00</span>
<span class="t" style="top:335.84px;font-size:12px;line-height:16px;color:#fff;right:22.00px;transform-origin:100% 0;transform:scaleX(0.9000);">1,500.00</span>
<div style="left:218px;top:633px;width:791px;height:19px;border:1px solid #7b9bdd;border-top:0;background:linear-gradient(#e9f0fd 0,#cfdef8 45%,#a9c2f1 100%)"></div>
<span class="t" style="top:634.84px;font-size:12px;line-height:16px;color:#000;right:359.00px;transform-origin:100% 0;transform:scaleX(0.8872);">Total</span>
<span class="t" style="top:634.84px;font-size:12px;line-height:16px;color:#000;right:287.00px;transform-origin:100% 0;transform:scaleX(0.9000);">9,804.70</span>
<div class="hdv" style="left:672px;top:636px"></div>
<span class="t" style="top:634.84px;font-size:12px;line-height:16px;color:#000;right:224.00px;transform-origin:100% 0;transform:scaleX(0.9000);">0.00</span>
<div class="hdv" style="left:742px;top:636px"></div>
<span class="t" style="top:634.84px;font-size:12px;line-height:16px;color:#000;right:158.00px;transform-origin:100% 0;transform:scaleX(0.9000);">1,554.12</span>
<div class="hdv" style="left:805px;top:636px"></div>
<span class="t" style="top:634.84px;font-size:12px;line-height:16px;color:#000;right:88.00px;transform-origin:100% 0;transform:scaleX(0.9000);">0.00</span>
<div class="hdv" style="left:871px;top:636px"></div>
<span class="t" style="top:634.84px;font-size:12px;line-height:16px;color:#000;right:22.00px;transform-origin:100% 0;transform:scaleX(0.9000);">8,250.59</span>
<div class="hdv" style="left:941px;top:636px"></div>
<span class="t" style="top:657.84px;font-size:12px;line-height:16px;color:#1c08c4;left:914.00px;transform-origin:0 0;transform:scaleX(0.8958);">Total 8 Checks.</span>
<div class="btnd" style="left:218px;top:679px;width:85px;height:24px"></div>
<span class="t" style="top:684.34px;font-size:12px;line-height:16px;color:#707074;left:109.40px;width:300px;text-align:center;transform-origin:50% 0;transform:scaleX(0.8500);"><u>E</u>dit</span>
<div class="btnd" style="left:309px;top:679px;width:85px;height:24px"></div>
<span class="t" style="top:684.34px;font-size:12px;line-height:16px;color:#707074;left:200.00px;width:300px;text-align:center;transform-origin:50% 0;transform:scaleX(0.8500);"><u>D</u>elete</span>
<div class="btn" style="left:400px;top:679px;width:85px;height:24px"></div>
<span class="t" style="top:684.34px;font-size:12px;line-height:16px;color:#000;left:415.00px;transform-origin:0 0;transform:scaleX(0.8565);"><u>P</u>rint &gt;&gt;</span>
<div style="left:473px;top:689px;width:0;height:0;border:3px solid transparent;border-top:3px solid #000;border-bottom:0"></div>
<div class="btn" style="left:924px;top:679px;width:85px;height:24px"></div>
<span class="t" style="top:684.34px;font-size:12px;line-height:16px;color:#000;left:815.70px;width:300px;text-align:center;transform-origin:50% 0;transform:scaleX(0.8400);"><u>C</u>lose</span>
<svg style="left:503px;top:678px" width="322" height="29" viewBox="0 0 322 29"><path d="M71 0.5H318.0L321.5 4.0V25.0L318.0 28.5H4.0L0.5 25.0V4.0L4.0 0.5H9" fill="none" stroke="#6f90d6" stroke-width="1"/></svg>
<span class="t" style="top:671.34px;font-size:12px;line-height:16px;color:#000;left:514.00px;transform-origin:0 0;transform:scaleX(0.8521);">Print Option</span>
<div style="left:515px;top:688px;width:12px;height:12px;border-radius:50%;border:1px solid #27459c;background:linear-gradient(135deg,#c9d0de 0,#eceff5 50%,#fff 100%)"></div>
<span class="t" style="top:686.14px;font-size:12px;line-height:16px;color:#000;left:532.00px;transform-origin:0 0;transform:scaleX(0.8421);">All Entries</span>
<div style="left:596px;top:688px;width:12px;height:12px;border-radius:50%;border:1px solid #27459c;background:linear-gradient(135deg,#c9d0de 0,#eceff5 50%,#fff 100%)"><div style="left:2.5px;top:2.5px;width:5px;height:5px;border-radius:50%;background:#2264c8"></div></div>
<span class="t" style="top:686.14px;font-size:12px;line-height:16px;color:#000;left:613.00px;transform-origin:0 0;transform:scaleX(0.8886);">Selected</span>
<div class="chk" style="left:667px;top:688px"></div>
<span class="t" style="top:686.14px;font-size:12px;line-height:16px;color:#000;left:684.50px;transform-origin:0 0;transform:scaleX(0.8748);">Print Hours by HH:MM</span>
<div style="left:796px;top:686px;width:19px;height:16px;border:1px solid #1c3b9c;background:linear-gradient(#e4edfc,#9db8ec)"><div style="left:2px;top:0;width:14px;height:14px;border-radius:50%;border:1px solid rgba(255,255,255,.92);background:radial-gradient(circle at 40% 30%,#4f80ea 0,#1f4fd0 60%,#123aa8 100%)"></div></div>
<span class="t" style="top:688.33px;font-size:10px;line-height:13px;color:#fff;font-weight:bold;-webkit-text-stroke:0;left:656.00px;width:300px;text-align:center;transform-origin:50% 0;">?</span>
<div style="left:11px;top:715px;width:987px;height:20px;border:1px solid #3c9af6;background:linear-gradient(#c4d9f9 0,#b4ccf5 50%,#a7c2f2 100%)"></div>
<span class="t" style="top:717.89px;font-size:11px;line-height:14px;color:#000;font-weight:bold;-webkit-text-stroke:0;left:25.50px;transform-origin:0 0;transform:scaleX(1.0762);">Current Business: ABC PRODUCTION COMPANY (ABC)</span>
<svg style="left:1003px;top:723px" width="13" height="13" viewBox="0 0 13 13"><g fill="#fff"><rect x="10" y="2" width="2" height="2"/><rect x="6" y="6" width="2" height="2"/><rect x="10" y="6" width="2" height="2"/><rect x="2" y="10" width="2" height="2"/><rect x="6" y="10" width="2" height="2"/><rect x="10" y="10" width="2" height="2"/></g><g fill="#2d4f93"><rect x="9" y="1" width="2" height="2"/><rect x="5" y="5" width="2" height="2"/><rect x="9" y="5" width="2" height="2"/><rect x="1" y="9" width="2" height="2"/><rect x="5" y="9" width="2" height="2"/><rect x="9" y="9" width="2" height="2"/></g></svg>
</body></html>
